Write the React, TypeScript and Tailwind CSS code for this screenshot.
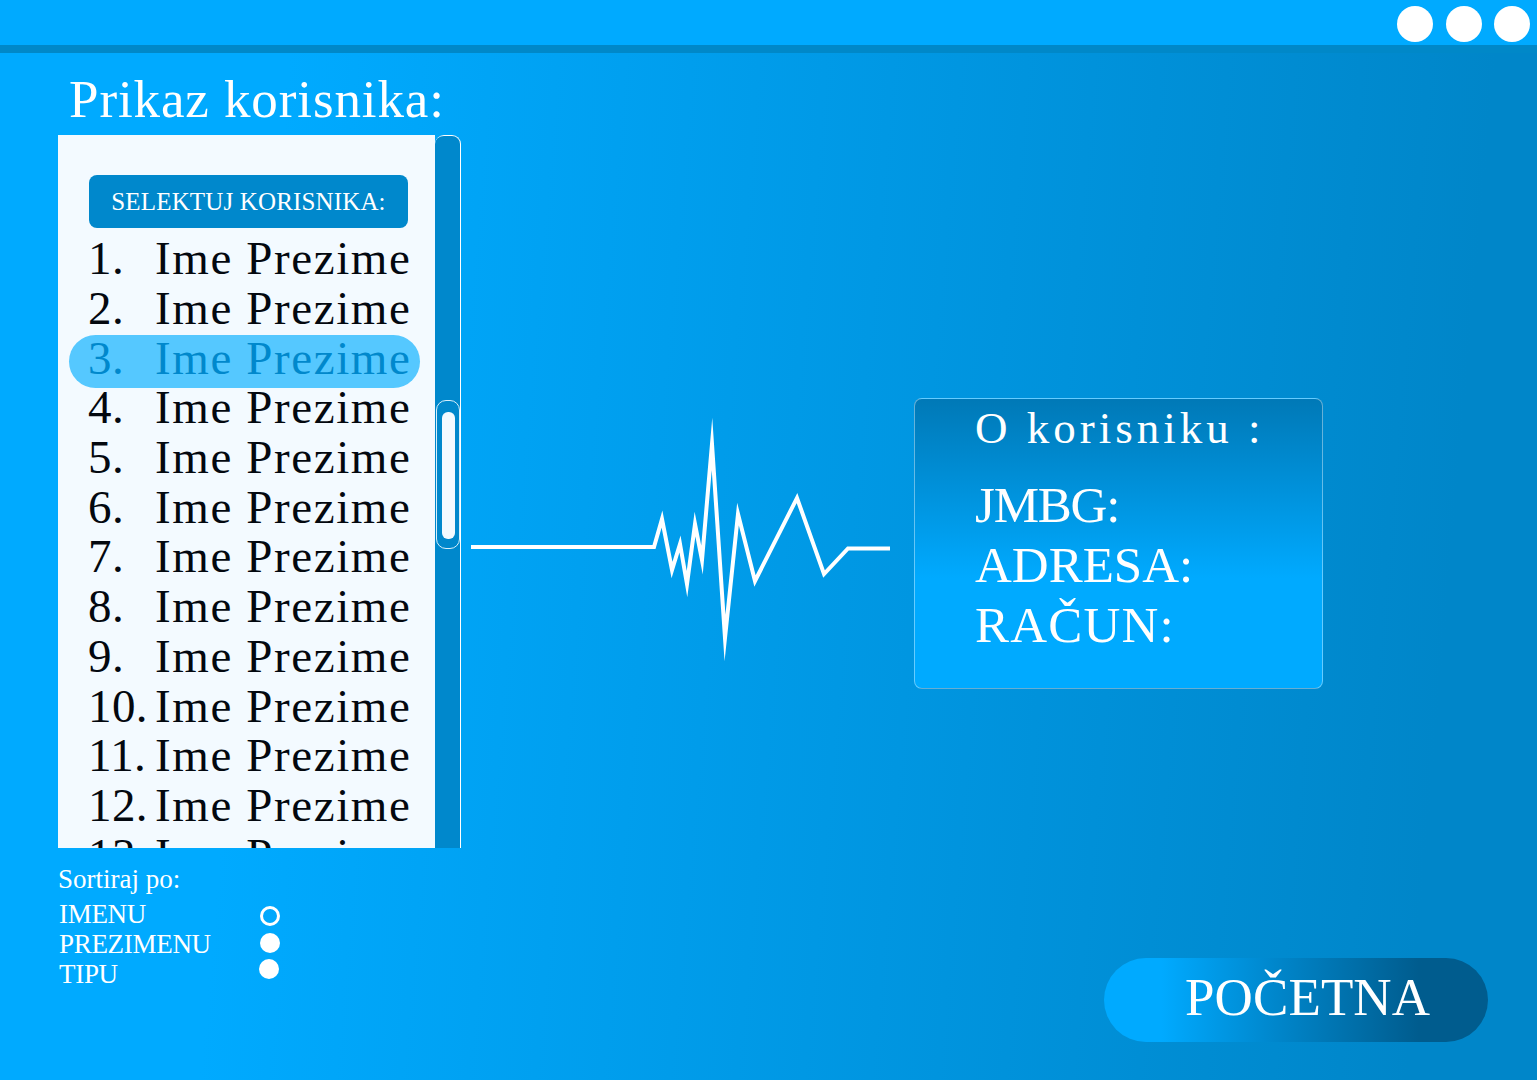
const SERIF = "font-['Liberation_Serif',serif]";

const users = Array.from({ length: 13 }, (_, i) => i + 1);

const ecgPoints =
  "471,547 654,547 662,519 672,570 680,544 687,584 695,524 702,560 712,444 725,638 738,514 755,581 797,498 824,574 848,548.5 890,548.5";

function UserRow({ index }: { index: number }) {
  const selected = index === 3;
  return (
    <div
      className={`-ml-[20px] -mr-[12px] flex shrink-0 items-center pl-[19px] text-[47px] leading-none tracking-[1.6px] ${
        selected
          ? "-mb-[4.9px] mt-[1.6px] h-[53px] rounded-[27px] bg-[#55c8ff] pb-[5px] text-[#0088cc]"
          : "h-[49.7px] text-[#03080f]"
      }`}
    >
      <span className="w-[67px] shrink-0 tracking-[0.4px]">{index}.</span>
      <span className="whitespace-nowrap">Ime Prezime</span>
    </div>
  );
}

function SortLabel({ label }: { label: string }) {
  return (
    <div className="flex h-[30px] items-center pl-px text-[27px] leading-none tracking-[-0.3px]">
      {label}
    </div>
  );
}

export default function App() {
  return (
    <div
      className={`${SERIF} flex h-[1080px] w-[1537px] flex-col overflow-hidden bg-linear-[95deg] from-[#00aaff] from-[18%] to-[#0086c9] to-[92%] text-white`}
    >
      <header className="flex h-[45px] shrink-0 items-center justify-end gap-[12.5px] bg-[#00aaff] pr-[7px] pt-[3px]">
        <span className="h-9 w-9 rounded-full bg-white" />
        <span className="h-9 w-9 rounded-full bg-white" />
        <span className="h-9 w-9 rounded-full bg-white" />
      </header>
      <div className="h-2 shrink-0 bg-[#0088c8]" />

      <main className="flex flex-1">
        <section className="ml-[58px] w-[403px] shrink-0">
          <h1 className="ml-[11px] flex h-[82px] items-center pt-[10px] text-[53px] font-normal leading-none tracking-[0.9px] whitespace-nowrap">
            Prikaz korisnika:
          </h1>
          <div className="flex h-[713px] overflow-hidden">
            <div className="flex-1 overflow-hidden bg-[#f3faff] pl-[31px] pr-[27px] pt-10">
              <div className="flex h-[53px] items-center justify-center rounded-lg bg-[#0088cc] text-[25px] leading-none tracking-[0.15px] text-white">
                SELEKTUJ KORISNIKA:
              </div>
              <div className="mt-[6px] flex flex-col">
                {users.map((u) => (
                  <UserRow key={u} index={u} />
                ))}
              </div>
            </div>
            <div className="relative w-[26px] shrink-0 rounded-t-[9px] border-r border-t border-white bg-[#0088cc]">
              <div className="absolute left-px top-[264px] flex h-[149px] w-6 justify-center rounded-[10px] border border-[#d7effb] pt-[11px]">
                <div className="h-[127px] w-[13px] rounded-md bg-[#f3faff]" />
              </div>
            </div>
          </div>

          <div className="pt-[13px] text-[27px] leading-none">
            <div className="flex h-[36px] items-center">Sortiraj po:</div>
            <div className="flex">
              <div className="mt-[2px] w-[202px]">
                <SortLabel label="IMENU" />
                <SortLabel label="PREZIMENU" />
                <SortLabel label="TIPU" />
              </div>
              <div className="flex flex-col gap-[6.5px] pt-[9px]">
                <span className="h-5 w-5 rounded-full border-[3px] border-white" />
                <span className="h-5 w-5 rounded-full bg-white" />
                <span className="-ml-px h-5 w-5 rounded-full bg-white" />
              </div>
            </div>
          </div>
        </section>

        <section className="flex flex-1 flex-col pt-[345px]">
          <div className="flex items-center">
            <svg
              width="419"
              height="291"
              viewBox="471 398 419 291"
              className="ml-[10px] shrink-0"
              aria-hidden="true"
            >
              <polyline
                points={ecgPoints}
                fill="none"
                stroke="#fff"
                strokeWidth="4"
                strokeMiterlimit="20"
              />
            </svg>
            <div className="ml-[24px] h-[291px] w-[409px] shrink-0 rounded-lg border border-white/40 bg-linear-to-b from-[#0079b7] to-[#00aaff] to-[62%] pl-[60px]">
              <h2 className="flex h-[58px] items-center text-[45px] font-normal leading-none tracking-[4px] whitespace-nowrap">
                O korisniku :
              </h2>
              <div className="mt-[18px] text-[51px] leading-[60px]">
                <div className="tracking-[-1.2px]">JMBG:</div>
                <div>ADRESA:</div>
                <div className="tracking-[1.2px]">RAČUN:</div>
              </div>
            </div>
          </div>
          <div className="mt-[269px] flex justify-end pr-[49px]">
            <button
              type="button"
              className="h-[84px] w-[384px] rounded-[42px] bg-linear-to-r from-[#00aaff] from-[15%] to-[#005c8e] to-[82%] pb-[5px] pl-[81px] text-left text-[53px] leading-none tracking-[0.1px] text-white"
            >
              POČETNA
            </button>
          </div>
        </section>
      </main>
    </div>
  );
}
